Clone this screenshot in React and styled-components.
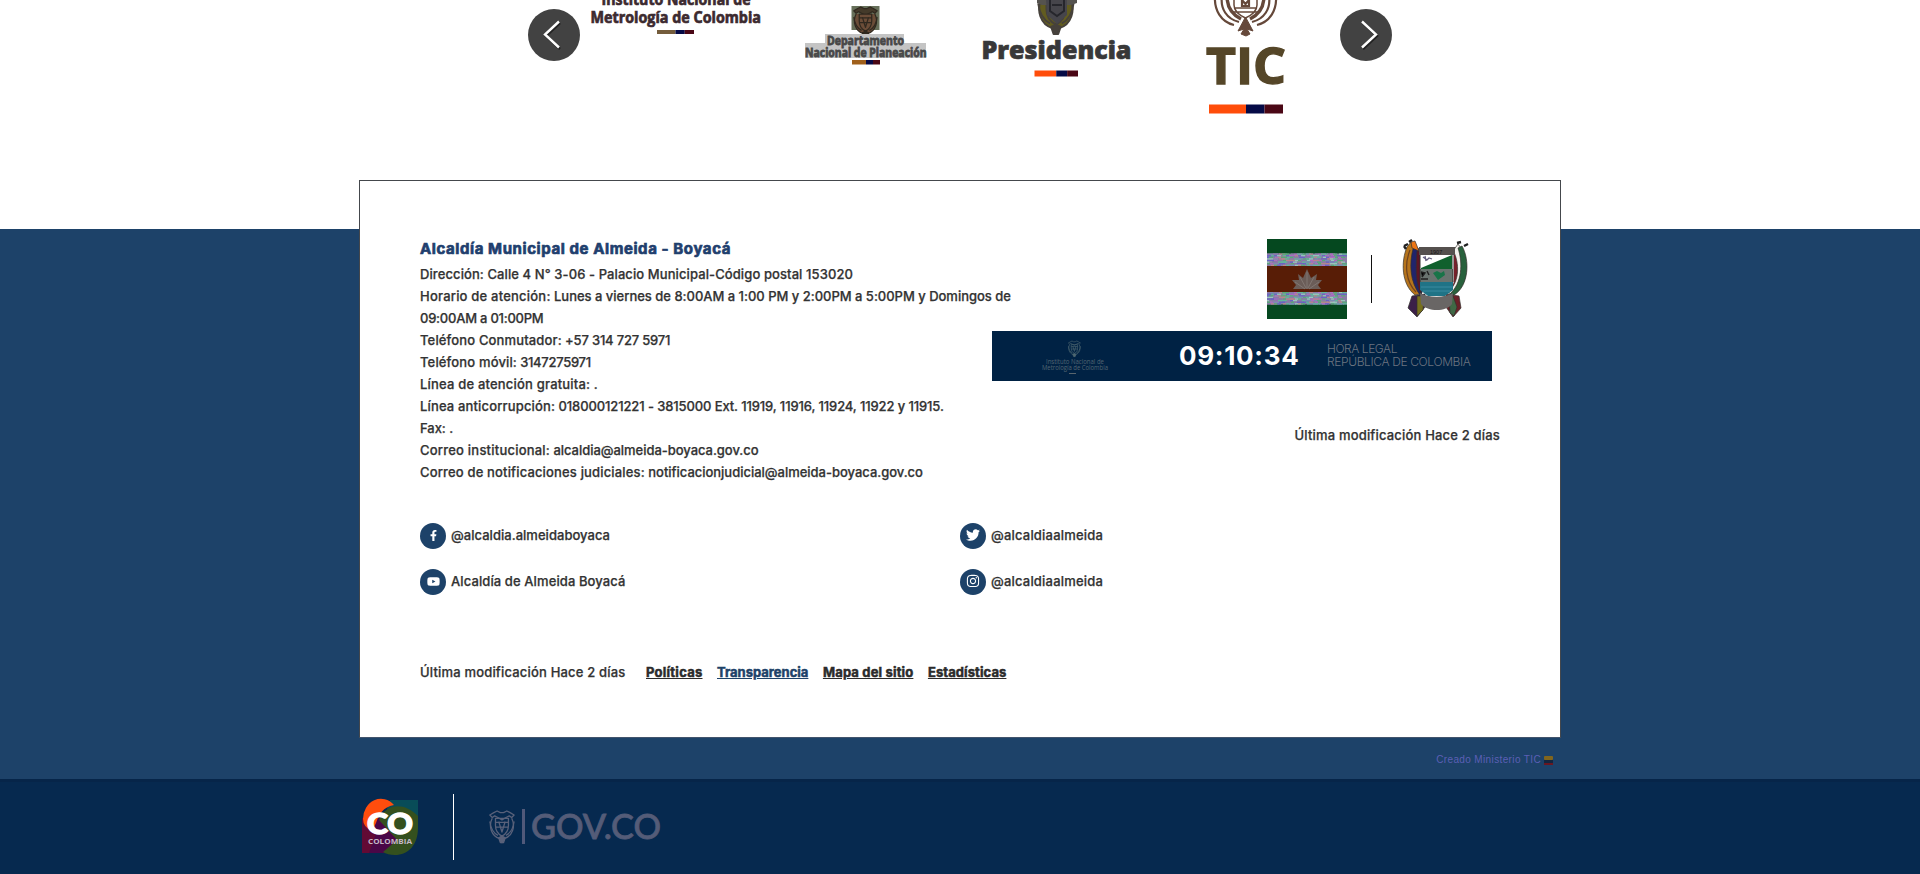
import React from "react";
import styled, { createGlobalStyle } from "styled-components";
import { FaFacebookF, FaTwitter, FaInstagram, FaYoutube } from "react-icons/fa";

const GlobalStyle = createGlobalStyle`
  * { box-sizing: border-box; }
  body { margin: 0; background: #fff; color: #333; font: 500 13px/22px Inter, "Liberation Sans", sans-serif; overflow: hidden; }
  svg { display: block; flex: none; overflow: visible; }
`;

const Page = styled.div`
  height: 874px;
  display: flex;
  flex-direction: column;
  overflow: hidden;
`;

const Carousel = styled.section`
  flex: none;
  height: 229px;
  display: flex;
  justify-content: center;
  align-items: flex-start;
`;

const ArrowButton = styled.button`
  width: 52px;
  height: 52px;
  margin-top: 9px;
  padding: 0;
  border: 0;
  border-radius: 50%;
  background: #424242;
  display: grid;
  place-items: center;
`;

const Slide = styled.div`
  width: 190px;
  height: 130px;
  overflow: hidden;
`;

const Footer = styled.footer`
  flex: none;
  height: 550px;
  background: #1d4269;
  display: flex;
  flex-direction: column;
  align-items: center;
`;

const Card = styled.div`
  width: 1202px;
  height: 558px;
  margin-top: -49px;
  padding: 57px 60px 0 60px;
  background: #fff;
  border: 1px solid #44474c;
  border-bottom-color: #42546c;
  flex: none;
`;

const Details = styled.div`
  display: grid;
  grid-template-columns: 572px 508px;
  height: 277px;
`;

const Contact = styled.div`
  display: flex;
  flex-direction: column;
  white-space: nowrap;
`;

const Title = styled.h2`
  margin: 0;
  height: 25px;
  font-size: 15px;
  line-height: 22px;
  font-weight: 700;
  letter-spacing: 0.589px;
  color: #1f3f6e;
  -webkit-text-stroke: 0.7px #1f3f6e;
`;

const Line = styled.span`
  white-space: pre;
  letter-spacing: ${(p) => p.$track || 0}px;
  -webkit-text-stroke: ${(p) => (p.$thin ? 0 : 0.25)}px currentColor;
`;

const Aside = styled.div`
  display: flex;
  flex-direction: column;
  align-items: flex-end;
`;

const Emblems = styled.div`
  display: flex;
  align-items: center;
  height: 80px;
  margin: 1px 32px 12px 0;
`;

const EmblemRule = styled.div`
  width: 1px;
  height: 48px;
  margin: 0 31px 0 24px;
  background: #111;
`;

const Clock = styled.div`
  width: 500px;
  height: 50px;
  margin-right: 8px;
  background: #002244;
  display: flex;
  align-items: center;
`;

const Institute = styled.div`
  width: 187px;
  padding-left: 49px;
`;

const Time = styled.div`
  width: 148px;
  font-size: 26px;
  line-height: 50px;
  font-weight: 700;
  letter-spacing: 0.7px;
  color: #fff;
`;

const LegalTime = styled.div`
  display: flex;
  flex-direction: column;
  font-size: 12px;
  font-weight: 300;
  line-height: 13px;
  color: #6c7480;
  padding-bottom: 3px;
`;

const Modified = styled.div`
  margin-top: 43px;
  white-space: nowrap;
`;

const Socials = styled.div`
  display: grid;
  grid-template-columns: 540px 540px;
  grid-auto-rows: 26px;
  row-gap: 20px;
  margin-top: 8px;
`;

const Social = styled.div`
  display: flex;
  align-items: center;
  gap: 5px;
`;

const SocialIcon = styled.span`
  width: 26px;
  height: 26px;
  border-radius: 50%;
  background: #1d4269;
  color: #fff;
  display: grid;
  place-items: center;
`;

const IconNudge = styled.span`
  display: block;
  margin-top: -2px;
`;

const Handle = styled(Line)`
  margin-top: -3px;
`;

const LinksRow = styled.nav`
  display: flex;
  align-items: center;
  margin-top: 66px;
`;

const FooterLink = styled.a`
  margin-left: ${(p) => p.$gap || 14.5}px;
  font-weight: 700;
  -webkit-text-stroke: 0.5px currentColor;
  letter-spacing: ${(p) => p.$track || 0}px;
  color: ${(p) => (p.$active ? "#1d4269" : "#2b2b2b")};
  text-decoration: underline;
  text-underline-offset: 1px;
`;

const Credit = styled.div`
  width: 1200px;
  margin-top: 12px;
  padding-right: 7px;
  display: flex;
  justify-content: flex-end;
  align-items: center;
  gap: 3px;
  font: 400 10px/20px "Liberation Sans", sans-serif;
  letter-spacing: 0.369px;
  color: #5c5fb5;
`;

const GovBar = styled.div`
  flex: none;
  height: 95px;
  background: #06294f;
  border-top: 3px solid #062549;
  display: flex;
  justify-content: center;
`;

const GovInner = styled.div`
  width: 1200px;
  display: flex;
  align-items: center;
  padding: 0 0 2px 1px;
`;

const GovRule = styled.div`
  width: 1px;
  height: 66px;
  margin: 0 34px;
  background: #fff;
`;

const Coat = ({ x, y, s = 1, line = "#564036", fill = "none", accent }) => (
  <g transform={`translate(${x} ${y}) scale(${s})`} fill="none" stroke={line} strokeWidth="1.6" strokeLinejoin="round">
    <path d="M6 2 10 0 14 2 18 2 22 0 26 2 31 5 28 8 25 6 21 8 16 11 11 8 7 6 4 8 1 5Z" fill={accent || "none"} />
    <path d="M4 9C-1 19 3 31 13 34L16 39 19 34C29 31 33 19 28 9" fill={fill} />
    <path d="M8 9V18C8 25 12 29 16 31 20 29 24 25 24 18V9ZM8 14H24M8 20H24M12 13 16 26 20 13M1 13C2 21 5 27 11 30M31 13C30 21 27 27 21 30" />
    <path d="M12 33 16 31 20 33 18 39H14Z" fill={line} />
  </g>
);

const Stripe = ({ x, y, w, h, first = "#ff4d0a" }) => (
  <g>
    <rect x={x} y={y} width={w / 2} height={h} fill={first} />
    <rect x={x + w / 2} y={y} width={w / 4} height={h} fill="#050a46" />
    <rect x={x + w * 0.75} y={y} width={w / 4} height={h} fill="#4a0715" />
  </g>
);

const logoFont = { fontFamily: '"Open Sans", sans-serif', lengthAdjust: "spacingAndGlyphs" };

const MetrologyLogo = () => (
  <svg width="190" height="130" fill="#3c2a2f" stroke="#3c2a2f" strokeWidth=".7">
    <text x="21.5" y="5" textLength="149" fontSize="15.5" fontWeight="700" {...logoFont}>Instituto Nacional de</text>
    <text x="10.5" y="22.5" textLength="170.5" fontSize="15.5" fontWeight="700" {...logoFont}>Metrología de Colombia</text>
    <g stroke="none"><Stripe x={77} y={30} w={37} h={4} first="#745c3c" /></g>
  </svg>
);

const PlanningLogo = () => (
  <svg width="190" height="130">
    <rect x="81.5" y="6" width="28" height="24" fill="#67705a" />
    <Coat x={83} y={7} s={0.78} line="#30291f" fill="#6b4d38" accent="#443a2a" />
    <path d="M55 34H134V43H156V58H35V43H55Z" fill="#c4c4c4" />
    <g fill="#484848" stroke="#484848" strokeWidth=".8">
      <text x="57" y="45" textLength="77" fontSize="11.5" fontWeight="700" {...logoFont}>Departamento</text>
      <text x="35" y="57" textLength="121.5" fontSize="11.5" fontWeight="700" {...logoFont}>Nacional de Planeación</text>
    </g>
    <Stripe x={82} y={60} w={28} h={4.5} first="#a0601c" />
  </svg>
);

const PresidencyLogo = () => (
  <svg width="190" height="130">
    <Coat x={77} y={-12} s={1.18} line="#46413b" fill="#625c20" accent="#4a4740" />
    <path d="M77 -1H117V3L111 5H82L77 3Z" fill="#55534f" />
    <path d="M86 -1H107V15L97 24 87 15Z" fill="#46454b" />
    <path d="M90 0V11L97 16 104 11V0M92 5H102" stroke="#26262c" strokeWidth="2" fill="none" />
    <text x="21.5" y="58.5" textLength="150" fontSize="25.5" fontWeight="800" fill="#383838" stroke="#383838" strokeWidth=".7" {...logoFont}>Presidencia</text>
    <Stripe x={74.5} y={70.5} w={43.5} h={6} />
  </svg>
);

const TicLogo = () => (
  <svg width="190" height="130">
    <g fill="none" stroke="#65483a" strokeWidth="2.2">
      <path d="M65-4C64 10 71 22 84 25M126-4C127 10 120 22 107 25M72-4C70 9 77 19 89 22M119-4C121 9 114 19 102 22" />
      <path d="M77-4C77 8 83 15 91 19M114-4C114 8 108 15 100 19" strokeWidth="3.4" />
      <path d="M84-3V5C84 10 89 15 95.5 18 102 15 107 10 107 5V-3M84 8H107M82 12H109" strokeWidth="1.5" />
      <path d="M92 0 95.5 4 99 0V6H92Z" />
      <path d="M95.5 17 88 31 94 29 91 34 96 36 100 34 97 29 103 31Z" fill="#65483a" strokeWidth="1" />
    </g>
    <text x="56" y="83.5" textLength="80" fontSize="51" fontWeight="700" fill="#554628" stroke="#554628" strokeWidth="1.4" {...logoFont}>TIC</text>
    <Stripe x={59} y={104.5} w={74} h={9} />
  </svg>
);

const Chevron = ({ right }) => (
  <svg width="52" height="52" fill="none" strokeWidth="2.4">
    <path d={right ? "M23 14 37 27 23 40" : "M32 14 18 27 32 40"} stroke="#222" />
    <path d={right ? "M22 12.5 36 25.5 22 38.5" : "M31 12.5 17 25.5 31 38.5"} stroke="#fff" />
  </svg>
);

const noiseColors = ["#8d79a8", "#63b59b", "#b06cc0", "#7b8db5", "#58a878", "#b9858d", "#6a62c4", "#9ac7bd"];
const noiseCells = Array.from({ length: 160 }, (_, i) => ({
  x: Math.max(0, (i % 20) * 4 - ((i * 7) % 3)),
  y: Math.floor(i / 20) * 1.6,
  w: 3 + ((i * 11) % 6),
  c: noiseColors[Math.floor(Math.abs(Math.sin(i * 12.9898) * 43758.5)) % 8],
}));

const NoiseBand = ({ y }) => (
  <g transform={`translate(0 ${y})`}>
    <rect width="80" height="12.5" fill="#8583a0" />
    {noiseCells.map((n, i) => (
      <rect key={i} x={n.x} y={n.y} width={Math.min(n.w, 80 - n.x)} height="1.3" fill={n.c} />
    ))}
  </g>
);

const MunicipalFlag = () => (
  <svg width="80" height="80">
    <rect width="80" height="80" fill="#05481f" />
    <rect y="27" width="80" height="26" fill="#581d06" />
    <NoiseBand y={14.5} />
    <NoiseBand y={53} />
    <path d="M40 30 44 39 50 35 49 41 55 41 51 46 54 50H26L29 46 25 41 32 41 31 35 36 39Z" fill="#6b5d58" />
    <path d="M40 33V50M33 38 39 49M47 38 41 49M28 43 38 50M52 43 42 50" stroke="#8b817c" strokeWidth=".7" />
  </svg>
);

const MunicipalShield = () => (
  <svg width="65" height="80">
    <g stroke="#33302c" strokeWidth=".7">
      <path d="M9 57 22 55 22 68 14 78 5 69Z" fill="#3b2048" />
      <path d="M14 57 21 57 20 71 14 77Z" fill="#77701d" />
      <path d="M56 57 43 55 43 68 50 78 58 69Z" fill="#6b2028" />
      <path d="M50 57 46 57 47 74 51 77 54 68Z" fill="#3f6845" />
      <path d="M4 8C-2 22-2 45 12 56L18 55 15 10 8 3Z" fill="#b5741c" />
      <path d="M7 11C1 26 3 43 13 53" fill="none" stroke="#6e4220" strokeWidth="1.2" />
      <path d="M10 10C6 25 7 43 17 56L19 54V12L13 8Z" fill="#20246b" />
      <path d="M14 12C13 26 12 44 18 55V12Z" fill="#5d1525" />
      <path d="M8 3 12 2 16 12 9 9Z" fill="#ec7514" />
      <path d="M55 5C67 20 66 46 50 56L46 55 50 12Z" fill="#f3f1ed" />
      <path d="M59 7C67 21 66 47 51 56L47 55C59 44 60 24 55 9Z" fill="#28613c" />
      <path d="M50 11C57 25 56 42 47 51V13Z" fill="#75202a" />
    </g>
    <path d="M17 8H51V40C51 49 44 56 33 58 22 56 17 49 17 40Z" fill="#fff" />
    <rect x="16" y="8" width="36" height="8" fill="#55504e" />
    <text x="27" y="14.5" fontSize="5.5" fill="#171717" fontFamily="Liberation Sans, sans-serif">1907</text>
    <path d="M18 29 49 16V30H18Z" fill="#10602d" />
    <rect x="17" y="30" width="33" height="13" fill="#69736f" />
    <path d="M30 34 34 32 38 34 41 32 42 36 35 41Z" fill="#187448" />
    <path d="M18 33 22 34 19 38M24 32 26 36M18 40H25" stroke="#202020" strokeWidth="1.4" />
    <path d="M17 43H50V51L42 57H25L17 51Z" fill="#1f7386" />
    <path d="M18 48H49M20 52H47" stroke="#3a8ba0" />
    <path d="M20 18 24 21 26 19 29 20M22 17 23 22" stroke="#666080" strokeWidth="1.3" fill="none" />
    <path d="M17 54C25 59 42 59 50 54L49 65C43 73 25 73 18 65Z" fill="#696665" />
    <path d="M1 7 5 5M3 10 1 7M6 3 9 1M54 4 58 3M61 7 65 5" stroke="#202020" strokeWidth="2.4" />
    <path d="M17 16V43M50 16V43" stroke="#33302c" strokeWidth="1" />
  </svg>
);

const InstituteLogo = () => (
  <svg width="68" height="50" fill="#536572">
    <Coat x={27} y={10} s={0.4} line="#4d6670" />
    <text x="5" y="32.5" textLength="58" fontSize="6.5" {...logoFont}>Instituto Nacional de</text>
    <text x="1" y="39" textLength="66" fontSize="6.5" {...logoFont}>Metrología de Colombia</text>
    <rect x="28" y="42" width="7" height="1" fill="#59656d" />
  </svg>
);

const ColombiaLogo = () => (
  <svg width="58" height="58">
    <path d="M29 2H57V30L45 43 22 23Z" fill="#084c58" />
    <path d="M1 20V55H30L43 40 30 20Z" fill="#4a0747" />
    <path d="M1 20V55H8L15 36Z" fill="#620a34" />
    <path d="M18 22C25 5 43 4 57 18V30C57 47 47 57 34 57 29 57 25 56 22 54L36 42Z" fill="#34501e" />
    <path d="M2 21A18 20 0 0 1 33 7C22 9 18 16 15 25L11 33Q2 29 2 21Z" fill="#ff4d0d" />
    <text x="6" y="36" textLength="46" fontSize="29" fontWeight="900" fontFamily="Lato, sans-serif" lengthAdjust="spacingAndGlyphs" fill="#fff" stroke="#fff" strokeWidth="1.4">CO</text>
    <text x="7" y="46" textLength="44" fontSize="6.5" fontWeight="700" fill="#c3b7c4" {...logoFont}>COLOMBIA</text>
  </svg>
);

const GovLogo = () => (
  <svg width="174" height="36">
    <Coat x={1} y={2} s={0.81} line="#59617a" />
    <rect x="34" y="0" width="3" height="35" fill="#50597a" />
    <text x="43" y="30" textLength="130" fontSize="34.5" fontFamily="Lato, sans-serif" lengthAdjust="spacingAndGlyphs" fill="#545c78" stroke="#545c78" strokeWidth=".8">GOV.CO</text>
  </svg>
);

const FlagIcon = () => (
  <svg width="9" height="9">
    <rect width="9" height="4" rx="1" fill="#80651d" />
    <rect y="4" width="9" height="3" fill="#14263f" />
    <rect y="7" width="9" height="2" fill="#681722" />
  </svg>
);

const contactLines = [
  ["Dirección:", 0.094, " Calle 4 N° 3-06 - Palacio Municipal-Código postal 153020", 0.094],
  ["Horario de atención:", 0.21, " Lunes a viernes de 8:00AM a 1:00 PM y 2:00PM a 5:00PM y Domingos de", -0.01],
  ["", 0, "09:00AM a 01:00PM", -0.23],
  ["Teléfono Conmutador:", 0.145, " +57 314 727 5971", -0.19],
  ["Teléfono móvil:", 0.15, " 3147275971", -0.3],
  ["Línea de atención gratuita:", 0.193, " .", 0.193],
  ["Línea anticorrupción:", 0.16, " 018000121221 - 3815000 Ext. 11919, 11916, 11924, 11922 y 11915.", -0.11],
  ["Fax:", -0.058, " .", -0.058],
  ["Correo institucional:", 0.22, " alcaldia@almeida-boyaca.gov.co", -0.04],
  ["Correo de notificaciones judiciales:", 0.16, " notificacionjudicial@almeida-boyaca.gov.co", -0.02],
];

const socials = [
  [FaFacebookF, "@alcaldia.almeidaboyaca", 0.03, 11],
  [FaTwitter, "@alcaldiaalmeida", 0.191, 14],
  [FaYoutube, "Alcaldía de Almeida Boyacá", 0.102, 13],
  [FaInstagram, "@alcaldiaalmeida", 0.191, 14],
];

export default function App() {
  return (
    <Page>
      <GlobalStyle />
      <Carousel>
        <ArrowButton aria-label="Anterior"><Chevron /></ArrowButton>
        <Slide><MetrologyLogo /></Slide>
        <Slide><PlanningLogo /></Slide>
        <Slide><PresidencyLogo /></Slide>
        <Slide><TicLogo /></Slide>
        <ArrowButton aria-label="Siguiente"><Chevron right /></ArrowButton>
      </Carousel>
      <Footer>
        <Card>
          <Details>
            <Contact>
              <Title>Alcaldía Municipal de Almeida - Boyacá</Title>
              {contactLines.map(([label, labelTrack, value, valueTrack]) => (
                <div key={label}>
                  {label && <Line $track={labelTrack}>{label}</Line>}
                  <Line $track={valueTrack}>{value}</Line>
                </div>
              ))}
            </Contact>
            <Aside>
              <Emblems>
                <MunicipalFlag />
                <EmblemRule />
                <MunicipalShield />
              </Emblems>
              <Clock>
                <Institute><InstituteLogo /></Institute>
                <Time>09:10:34</Time>
                <LegalTime>
                  <Line $thin $track={-0.448}>HORA LEGAL</Line>
                  <Line $thin $track={-0.366}>REPÚBLICA DE COLOMBIA</Line>
                </LegalTime>
              </Clock>
              <Modified><Line $track={0.18}>Última modificación Hace 2 días</Line></Modified>
            </Aside>
          </Details>
          <Socials>
            {socials.map(([Icon, name, track, size], i) => (
              <Social key={i}>
                <SocialIcon><IconNudge><Icon size={size} /></IconNudge></SocialIcon>
                <Handle $track={track}>{name}</Handle>
              </Social>
            ))}
          </Socials>
          <LinksRow>
            <Line $track={0.18}>Última modificación Hace 2 días</Line>
            <FooterLink $gap={20.5} $track={0.253}>Políticas</FooterLink>
            <FooterLink $active>Transparencia</FooterLink>
            <FooterLink $track={0.164}>Mapa del sitio</FooterLink>
            <FooterLink $track={0.089}>Estadísticas</FooterLink>
          </LinksRow>
        </Card>
        <Credit>Creado Ministerio TIC <FlagIcon /></Credit>
      </Footer>
      <GovBar>
        <GovInner>
          <ColombiaLogo />
          <GovRule />
          <GovLogo />
        </GovInner>
      </GovBar>
    </Page>
  );
}
